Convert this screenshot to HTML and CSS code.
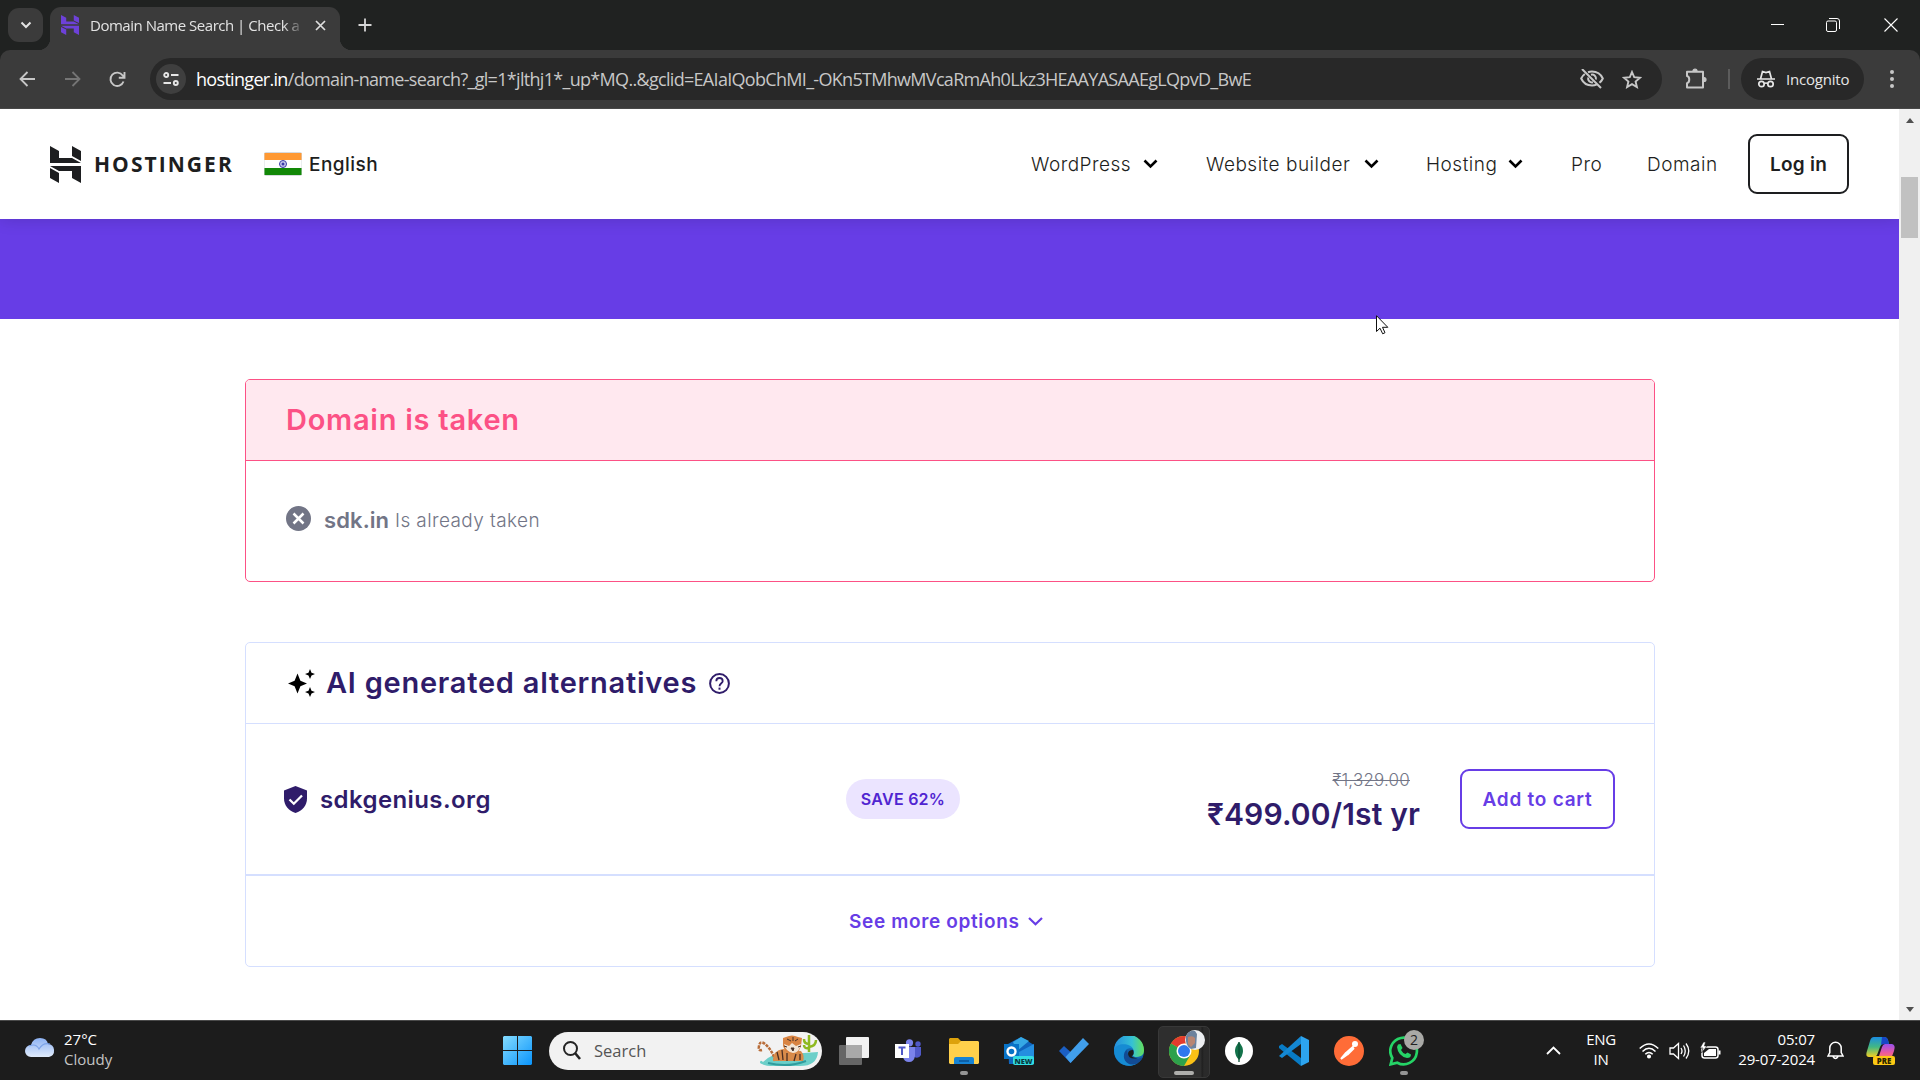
FILE: index.html
```html
<!DOCTYPE html>
<html lang="en">
<head>
<meta charset="utf-8">
<title>Domain Name Search</title>
<link rel="stylesheet" href="styles.css">
</head>
<body>
<div class="tabstrip">
  <div class="tab-search"><svg width="12" height="8" viewBox="0 0 12 8"><path d="M1.5 1.5 6 6l4.500-4.500" fill="none" stroke="#e3e3e3" stroke-width="2"/></svg></div>
  <div class="tab">
    <svg class="favicon" width="18" height="20" viewBox="0 0 31 37" preserveAspectRatio="none" fill="#6d41d8"><path d="M0 0 9 5V12H22L31 17H0ZM22 0 31 5V15L22 10ZM0 20H31V37L22 32V25H9L0 20ZM0 22 9 27V37L0 32Z"/></svg>
    <span class="tab-title">Domain Name Search | Check a</span>
    <svg class="tab-close" width="11" height="11" viewBox="0 0 11 11"><path d="M1 1 10 10M10 1 1 10" stroke="#dedede" stroke-width="1.700"/></svg>
  </div>
  <svg class="new-tab" width="14" height="14" viewBox="0 0 14 14"><path d="M7 .5V13.500M.5 7H13.500" stroke="#d6d6d6" stroke-width="1.800"/></svg>
  <div class="window-buttons">
    <svg width="13" height="14" viewBox="0 0 13 14"><path d="M0 6.500H13" stroke="#fff"/></svg>
    <svg width="14" height="14" viewBox="0 0 14 14" fill="none" stroke="#fff"><rect x=".5" y="3" width="10" height="10.500" rx="1.500"/><path d="M3 .5H11a2.500 2.500 0 0 1 2.500 2.500V11"/></svg>
    <svg width="14" height="14" viewBox="0 0 14 14"><path d="M.5.5 13.500 13.500M13.500.5.5 13.500" stroke="#fff" stroke-width="1.100"/></svg>
  </div>
</div>
<div class="toolbar">
  <svg class="nav-icon" width="17" height="16" viewBox="0 0 17 16" fill="none" stroke="#c7c7c7" stroke-width="1.800"><path d="M16 8H2M8.500 1 1.500 8l7 7"/></svg>
  <svg class="nav-icon" width="17" height="16" viewBox="0 0 17 16" fill="none" stroke="#757575" stroke-width="1.800"><path d="M1 8H15M8.500 1l7 7-7 7"/></svg>
  <svg class="nav-icon" width="17" height="17" viewBox="0 0 17 17" fill="none" stroke="#c7c7c7" stroke-width="1.900"><path d="M14.500 10.500A6.700 6.700 0 1 1 13.700 4.500L15.500 6.500M15.500 1V6.700H9.800"/></svg>
  <div class="omnibox">
    <span class="site-chip"><svg width="16" height="14" viewBox="0 0 16 14" fill="none" stroke="#e6e6e6" stroke-width="1.900"><circle cx="3.200" cy="3" r="2"/><path d="M8 3H15.500M.5 11H8"/><circle cx="12.800" cy="11" r="2"/></svg></span>
    <span class="url"><b>hostinger.in</b>/domain-name-search?_gl=1*jlthj1*_up*MQ..&amp;gclid=EAIaIQobChMI_-OKn5TMhwMVcaRmAh0Lkz3HEAAYASAAEgLQpvD_BwE</span>
    <svg class="eye-off" width="24" height="20" viewBox="0 0 24 20" fill="none" stroke="#c7c7c7" stroke-width="2"><path d="M8 3.200A11 11 0 0 1 12 2.500C17 2.500 21 5.500 22.800 9.500A11 11 0 0 1 19.500 13.700M16.500 15.600A11 11 0 0 1 12 16.500C7 16.500 3 13.500 1.200 9.500A11 11 0 0 1 4.800 5M2 0 21 19"/><path d="M8.200 8.500A4 4 0 0 0 13 13.300M11 5.700A4 4 0 0 1 15.900 10.500"/></svg>
    <svg class="star" width="20" height="19" viewBox="0 0 20 19" fill="none" stroke="#c7c7c7" stroke-width="1.900"><path d="M10 2 12.200 7.200 18 7.700 13.600 11.500 14.900 17 10 14.100 5.100 17 6.400 11.500 2 7.700 7.800 7.200Z"/></svg>
  </div>
  <svg class="puzzle" width="22" height="22" viewBox="0 0 22 22" fill="none" stroke="#c7c7c7" stroke-width="2" stroke-linejoin="round"><path d="M2 3.800H18V10.500V19.500H2V15.200C5 14.500 5 8.500 2 8Z"/><path d="M8 3a2 2 0 0 1 4 0ZM19 9.500a2 2 0 0 1 0 4Z" fill="#c7c7c7" stroke-width="1.200"/></svg>
  <i class="divider"></i>
  <div class="incognito">
    <svg width="18" height="18" viewBox="0 0 18 18" fill="none" stroke="#e6e6e6" stroke-width="1.700"><path d="M0 9H18M3.500 9 5.500 1.500 9 2.500 12.500 1.500 14.500 9"/><circle cx="4.500" cy="14" r="2.700"/><circle cx="13.500" cy="14" r="2.700"/><path d="M7 13.500Q9 12.500 11 13.500"/></svg>
    <span>Incognito</span>
  </div>
  <svg class="menu-dots" width="4" height="18" viewBox="0 0 4 18" fill="#c7c7c7"><circle cx="2" cy="2" r="2"/><circle cx="2" cy="9" r="2"/><circle cx="2" cy="16" r="2"/></svg>
</div>
<div class="viewport">
  <div class="page">
    <header class="site-header">
      <svg class="logo" width="31" height="37" viewBox="0 0 31 37" fill="#1d1e20"><path d="M0 0 9 5V12H22L31 17H0ZM22 0 31 5V15L22 10ZM0 20H31V37L22 32V25H9L0 20ZM0 22 9 27V37L0 32Z"/></svg>
      <span class="brand">HOSTINGER</span>
      <svg class="flag" width="38" height="24" viewBox="0 0 38 24"><rect width="38" height="24" rx="2" fill="#d6dade"/><path d="M0.500 1H37.500V8H.5Z" fill="#f93"/><path d="M.5 8H37.500V16H.5Z" fill="#fff"/><path d="M.5 16H37.500V23H.5Z" fill="#128807"/><circle cx="19" cy="12" r="3.500" fill="#c9c9ee" stroke="#3a3aa8"/><circle cx="19" cy="12" r="1.500" fill="#3a3aa8"/></svg>
      <span class="language">English</span>
      <nav class="menu">
        <span class="n1">WordPress</span><svg class="chev" viewBox="0 0 15 10"><path d="M1.500 1.500 7.500 7.500l6-6"/></svg>
        <span class="n2">Website builder</span><svg class="chev" viewBox="0 0 15 10"><path d="M1.500 1.500 7.500 7.500l6-6"/></svg>
        <span class="n3">Hosting</span><svg class="chev" viewBox="0 0 15 10"><path d="M1.500 1.500 7.500 7.500l6-6"/></svg>
        <span class="n4">Pro</span>
        <span class="n5">Domain</span>
      </nav>
      <div class="login">Log in</div>
    </header>
    <div class="banner"></div>
    <main class="results">
      <section class="card taken">
        <h2 class="card-head">Domain is taken</h2>
        <div class="taken-body">
          <svg width="25" height="25" viewBox="0 0 25 25"><circle cx="12.500" cy="12.500" r="12.500" fill="#727586"/><path d="M7.500 7.500 17.500 17.500M17.500 7.500 7.500 17.500" stroke="#fff" stroke-width="2.500"/></svg>
          <b>sdk.in</b><span>Is already taken</span>
        </div>
      </section>
      <section class="card alternatives">
        <h2 class="card-head">
          <svg class="sparkle" width="27" height="28" viewBox="0 0 27 28"><path d="M9.500 4.500 12.400 11.700 19 14.500 12.400 17.300 9.500 24.500 6.600 17.300 0 14.500 6.600 11.700ZM22 0 23.500 3.700 27 5 23.500 6.500 22 10 20.500 6.500 17 5 20.500 3.700ZM22 18 23.500 21.700 27 23 23.500 24.500 22 28 20.500 24.500 17 23 20.500 21.700Z"/></svg>
          <span>AI generated alternatives</span>
          <svg class="help" width="21" height="21" viewBox="0 0 21 21" fill="none" stroke="#2f1c6a" stroke-width="2"><circle cx="10.500" cy="10.500" r="9.400"/><path d="M7.300 8.200C7.300 3.900 13.700 3.900 13.700 8.200 13.700 10.200 10.500 10.500 10.500 13.200" stroke-width="1.800"/><path d="M10.500 14.600V16.700"/></svg>
        </h2>
        <div class="offer">
          <svg class="shield" width="23" height="27" viewBox="0 0 23 27"><path d="M11.500 0 23 4.500V12.500C23 19 18.500 25 11.500 27 4.500 25 0 19 0 12.500V4.500Z" fill="#2f1c6a"/><path d="M5.500 13.500 9.800 17.700 18 9.500" fill="none" stroke="#fff" stroke-width="2.300"/></svg>
          <span class="domain">sdkgenius.org</span>
          <span class="save">SAVE 62%</span>
          <div class="prices"><s>₹1,329.00</s><strong>₹499.00/1st yr</strong></div>
          <div class="cart">Add to cart</div>
        </div>
        <div class="more"><span>See more options</span><svg width="15" height="9" viewBox="0 0 15 9"><path d="M1 1 7.500 7.300 14 1" fill="none" stroke="#673de6" stroke-width="2.200"/></svg></div>
      </section>
    </main>
  </div>
  <div class="scrollbar"><i class="arrow up"></i><i class="thumb"></i><i class="arrow down"></i></div>
</div>
<footer class="taskbar">
  <div class="weather">
    <svg width="30" height="21" viewBox="0 0 30 21"><defs><linearGradient id="cl" x2="0" y2="1"><stop stop-color="#8db2f3"/><stop offset="1" stop-color="#e0ebfb"/></linearGradient></defs><path d="M6 20a6 6 0 0 1 0-12Q8 1 15 1T23 7a6.600 6.600 0 0 1 1 13Z" fill="url(#cl)"/><path d="M4 9Q11 6 14 12Q18 5 25 7" fill="none" stroke="#7ca3e8" stroke-width="1.200"/></svg>
    <div><span class="temp">27°C</span><span class="cond">Cloudy</span></div>
  </div>
  <svg class="start" width="29" height="29" viewBox="0 0 29 29"><defs><linearGradient id="wn" x2="1" y2="1"><stop stop-color="#84dcff"/><stop offset="1" stop-color="#0a94fb"/></linearGradient></defs><path d="M1 0H14V14H0V1ZM15 0H28L29 1V14H15ZM0 15H14V29H1L0 28ZM15 15H29V28L28 29H15Z" fill="url(#wn)"/></svg>
  <div class="search">
    <svg width="18" height="19" viewBox="0 0 18 19" fill="none" stroke="#242424" stroke-width="2"><circle cx="7.500" cy="7.500" r="6.500"/><path d="M12 12 17 18" stroke-width="2.600"/></svg>
    <span>Search</span>
    <svg class="tiger" width="64" height="34" viewBox="0 0 64 34">
      <path d="M7 28Q16 18 34 20L62 18Q61 32 44 32H18Q8 32 4 29Q4 25 7 28Z" fill="#6ccfc9"/><path d="M12 29Q32 34 50 27" fill="none" stroke="#2f9c9e" stroke-width="2"/>
      <path d="M19 27Q17 17 9 10Q4 6 3 12Q2 17 6 16" fill="none" stroke="#b96d39" stroke-width="2.500" stroke-dasharray="3 1"/>
      <path d="M17 27Q17 16 27 15L45 17Q49 22 47 27Z" fill="#d88b4a"/><path d="M21 18 23 26M26 16 27 26M31 19V27M40 20 38 27M44 20V26" stroke="#4a2e22" stroke-width="1.300"/>
      <path d="M27 4 30 3Q36 0 42 3L46 4 45 12Q43 19 37 20 29 19 27 12Z" fill="#d98442"/><path d="M28 10 33 12 36 9 40 12 45 10Q43 19 37 19 30 18 28 10Z" fill="#f2e5d5"/><path d="M31 5 35 7M37 3V7M42 5 39 7M28 12 31 13M45 12 42 13M35 14H38L37 17Z" stroke="#49332b" fill="#49332b"/>
      <path d="M53 18V1M53 10Q48 10 48 5M53 13Q60 12 60 6M53 14Q48 15 48 11" fill="none" stroke="#8eb91f" stroke-width="2.500"/>
    </svg>
  </div>
  <div class="apps">
    <span class="app"><svg width="30" height="28" viewBox="0 0 30 28"><rect x="7" width="23" height="21" rx="1" fill="#f2f2f2"/><rect y="8" width="23" height="20" rx="1" fill="#666"/><path d="M7 8H23V21H7Z" fill="#a9a9a9"/></svg></span>
    <span class="app"><svg width="27" height="24" viewBox="0 0 27 24"><circle cx="14.500" cy="3.800" r="3.600" fill="#7b83eb"/><circle cx="23" cy="5" r="2.700" fill="#5059c9"/><path d="M16 8H26V16Q24 20 19 18Z" fill="#5059c9"/><path d="M8 8H20V17Q19 23 14 23T8 18Z" fill="#7b83eb"/><path d="M0 5H14V19H0Z" fill="#fff"/><path d="M3.500 8.500H10.500M7 8V16" stroke="#5059c9" stroke-width="2"/></svg></span>
    <span class="app running"><svg width="30" height="26" viewBox="0 0 30 26"><path d="M1 0H9L12 3H29V10H0V1Z" fill="#dda20b"/><path d="M0 6H9L12 3H29L30 4V25L29 26H1L0 25Z" fill="#ffd04b"/><path d="M5 26V21Q5 19 7 19H23Q25 19 25 21V26Z" fill="#1683d4"/><path d="M10 23H20" stroke="#0b5598" stroke-width="1.500"/></svg></span>
    <span class="app"><svg width="30" height="28" viewBox="0 0 30 28"><path d="M4 7 17 0 30 8V27H5Z" fill="#1065bd"/><path d="M9 5 17 0 25 4 13 14Z" fill="#35a8e5"/><path d="M15 15 30 7V27H12Z" fill="#248ee0"/><path d="M0 7H15V22H0Z" fill="#0873c7"/><circle cx="7.500" cy="14.500" r="4" fill="none" stroke="#fff" stroke-width="2.400"/><rect x="9" y="19" width="21" height="9" rx="2" fill="#32dce2"/><text x="19.500" y="26.500" text-anchor="middle" font-size="7.500" font-weight="800" font-family="Open Sans" fill="#073b42">NEW</text></svg></span>
    <span class="app"><svg width="30" height="25" viewBox="0 0 30 25"><path d="M0 13 5 8 17 19 11.500 25Z" fill="#1b5fc4"/><path d="M11.500 25 6.500 19 24 0 30 6Z" fill="#419fec"/></svg></span>
    <span class="app"><svg width="30" height="30" viewBox="0 0 30 30"><defs><linearGradient id="ed" x2="1"><stop stop-color="#238dde"/><stop offset=".6" stop-color="#35c1d5"/><stop offset="1" stop-color="#65e05a"/></linearGradient></defs><circle cx="15" cy="15" r="15" fill="#1264ad"/><path d="M0 14A15 15 0 0 1 30 14C30 20 26 21 21 21 17 20 20 18 20 15 18 8 4 7 0 14Z" fill="url(#ed)"/><path d="M0 14C2 6 17 7 19 13 13 10 9 16 11 21 13 26 18 28 22 28 13 33 0 27 0 14Z" fill="#168bd3"/><path d="M13 14C13 22 22 25 29 21 26 27 20 30 15 28 8 25 9 16 13 14Z" fill="#124b94"/><path d="M19 14Q21 19 17.500 20 19 22 24 22 15 24 14 18 14 14 19 14Z" fill="#1c1c1c"/></svg></span>
    <span class="app active"><svg width="36" height="37" viewBox="0 0 36 37"><circle cx="15" cy="22" r="15" fill="#fbc116"/><path d="M15 22 2 14.500A15 15 0 0 1 28 14.500H15Z" fill="#e33b2e"/><path d="M2 14.500A15 15 0 0 0 15 37L21.500 25.800 15 22Z" fill="#2da14c"/><circle cx="15" cy="22" r="7.500" fill="#fff"/><circle cx="15" cy="22" r="6" fill="#2f78ed"/><circle cx="26" cy="11" r="10" fill="#eceef1"/><path d="M17 7Q20 1 26 2L28 5 27 19 22 20Q16 17 17 7Z" fill="#6c829d"/><path d="M19 8Q24 6 26 9L26 14 22 18 19 15Z" fill="#b78572"/></svg></span>
    <span class="app"><svg width="28" height="28" viewBox="0 0 28 28"><circle cx="14" cy="14" r="14" fill="#fff"/><path d="M14 5Q22 14 14 23 6 14 14 5Z" fill="#13734b"/><path d="M14 5V25" stroke="#0b5035" stroke-width="1.300"/></svg></span>
    <span class="app"><svg width="30" height="30" viewBox="0 0 30 30"><path d="M22 0 30 4V26L22 30Z" fill="#2da4ef"/><path d="M0 10 3 8 22 22V30L0 12Z" fill="#087bc5"/><path d="M0 20 22 0V8L3 22 0 20Z" fill="#1488d3"/></svg></span>
    <span class="app"><svg width="30" height="30" viewBox="0 0 30 30"><circle cx="15" cy="15" r="15" fill="#ff6c37"/><circle cx="21" cy="8" r="3" fill="#fff"/><path d="M20 10 12 17 14 18 20 12M12 17 7 23 14 18" fill="none" stroke="#fff" stroke-width="2"/></svg></span>
    <span class="app running"><svg width="30" height="30" viewBox="0 0 30 30"><path d="M3.300 22A13.300 13.300 0 1 1 8.300 26.700L1.700 28.300Z" fill="none" stroke="#25d366" stroke-width="2.700"/><path d="M9 8.500 11.500 8 13.500 12 12 14Q13.500 17 16.500 18L18.500 16.500 22 18.500Q22 22 18 22 9 20 8 11Z" fill="#25d366"/></svg><em class="badge">2</em></span>
  </div>
  <svg class="caret" width="15" height="9" viewBox="0 0 15 9"><path d="M1 8 7.500 1.500 14 8" fill="none" stroke="#fff" stroke-width="1.800"/></svg>
  <div class="lang"><span>ENG</span><span>IN</span></div>
  <div class="status">
    <svg width="20" height="16" viewBox="0 0 20 16" fill="none" stroke="#fff" stroke-width="1.500"><path d="M.7 5.500Q10-3.500 19.300 5.500M3.500 8.500Q10 2 16.500 8.500M6.300 11.300Q10 7.500 13.700 11.300"/><circle cx="10" cy="13.500" r="1.300" fill="#fff"/></svg>
    <svg width="21" height="18" viewBox="0 0 21 18" fill="none" stroke="#fff" stroke-width="1.300"><path d="M1 6H4.500L9.500 1.500V16.500L4.500 12H1ZM12 6Q14 9 12 12M14.500 3.500Q18 9 14.500 14.500M17 1.500Q22.500 9 17 16.500"/></svg>
    <svg width="21" height="18" viewBox="0 0 21 18"><rect x="2" y="5" width="16" height="11" rx="2.500" fill="none" stroke="#fff" stroke-width="1.500"/><path d="M9 7H16V14H4V11ZM18.500 8.500H20.500V12.500H18.500Z" fill="#fff"/><path d="M3.500 0 0 6H3L1.500 11 7 4H4.500L5.500 0Z" fill="#fff" stroke="#1c1c1c" stroke-width=".6"/></svg>
  </div>
  <div class="clock"><span>05:07</span><span class="date">29-07-2024</span></div>
  <svg class="bell" width="17" height="19" viewBox="0 0 17 19" fill="none" stroke="#fff" stroke-width="1.500"><path d="M1 15 2.800 11.500V7A5.700 5.700 0 0 1 14.200 7V11.500L16 15ZM6 15.500Q8.500 19.500 11 15.500"/></svg>
  <svg class="copilot" width="30" height="28" viewBox="0 0 30 28"><defs><linearGradient id="c1" x2="0" y2="1"><stop stop-color="#1b8de2"/><stop offset=".5" stop-color="#42b883"/><stop offset="1" stop-color="#f5cf21"/></linearGradient><linearGradient id="c2" x2="0" y2="1"><stop stop-color="#9750ee"/><stop offset=".6" stop-color="#ee5a9b"/><stop offset="1" stop-color="#f48d4f"/></linearGradient></defs><path d="M8 0H18Q21 0 22 3L23 7H17Q15 7 14 10L11 18Q10 20 7 20H3Q-1 20 1 14L4 4Q5 0 8 0Z" fill="url(#c1)"/><path d="M16 0H18Q21 0 22 3L23 7H17L15 8Z" fill="#1746c7"/><path d="M19 7H26Q30 8 28 14L25 22H12L16 10Q17 7 19 7Z" fill="url(#c2)"/><rect x="7" y="19" width="22" height="9" rx="2" fill="#fcc914"/><text x="18" y="26.500" text-anchor="middle" font-size="7.800" font-weight="800" font-family="Open Sans" fill="#2c2500">PRE</text></svg>
</footer>
<svg class="cursor" width="13" height="20" viewBox="0 0 13 20"><path d="M.5.7V16.500L4 13.200 6.700 18.800 9 17.700 6.500 12.300H11.800Z" fill="#fff" stroke="#111"/></svg>
</body>
</html>
```
FILE: styles.css
```css
* { box-sizing: border-box; }
body { margin: 0; width: 1920px; height: 1080px; overflow: hidden; display: flex; flex-direction: column; background: #202221; font-family: "Open Sans", "Noto Sans", sans-serif; white-space: nowrap; }
svg { display: block; flex: none; }

/* Browser tab strip */
.tabstrip { height: 50px; flex: none; display: flex; align-items: flex-start; padding-left: 8px; }
.tab-search { width: 35px; height: 34px; margin-top: 8px; border-radius: 11px; background: #3b3b3b; display: grid; place-items: center; }
.tab { position: relative; width: 290px; height: 43px; margin: 7px 0 0 7px; border-radius: 11px 11px 0 0; background: #3b3b3b; display: flex; align-items: center; padding: 0 14px 7px 11px; }
.tab::before, .tab::after { content: ""; position: absolute; bottom: 0; width: 12px; height: 12px; }
.tab::before { left: -12px; background: radial-gradient(circle at 0 0, transparent 12px, #3b3b3b 12.5px); }
.tab::after { right: -12px; background: radial-gradient(circle at 100% 0, transparent 12px, #3b3b3b 12.5px); }
.tab-title { margin-left: 11px; width: 210px; font-size: 15px; letter-spacing: -.48px; line-height: 22px; color: #e3e3e3; -webkit-mask-image: linear-gradient(90deg, #000 193px, transparent 215px); }
.tab-close { margin-left: 15px; }
.new-tab { margin: 18px 0 0 18px; }
.window-buttons { margin: 18px 22px 0 auto; display: flex; gap: 44px; }
.window-buttons svg:first-child { margin-right: -2px; }

/* Browser toolbar */
.toolbar { height: 59px; flex: none; display: flex; align-items: center; padding-left: 19px; background: #3b3b3b; border-radius: 10px 10px 0 0; border-bottom: 1px solid #484848; }
.nav-icon { margin-right: 28px; }
.omnibox { width: 1512px; height: 42px; margin-left: -4px; border-radius: 21px; background: #282828; display: flex; align-items: center; padding-left: 6px; }
.site-chip { width: 30px; height: 30px; border-radius: 50%; background: #3f3f3f; display: grid; place-items: center; }
.url { margin-left: 10px; width: 1385px; font-size: 18px; letter-spacing: -.69px; color: #c7c7c7; }
.url b { font-weight: 400; color: #fff; }
.eye-off { margin-left: -1px; }
.star { margin-left: 18px; }
.puzzle { margin-left: 23px; }
.divider { width: 2px; height: 35px; margin: 0 11px 0 21px; background: #5c5c5c; height: 20px; }
.incognito { width: 123px; height: 42px; border-radius: 21px; background: #282828; display: flex; align-items: center; padding-left: 16px; gap: 11px; color: #e6e6e6; font-size: 15px; letter-spacing: -.2px; }
.menu-dots { margin-left: 26px; }

/* Web page */
.viewport { height: 911px; flex: none; display: flex; background: #fff; font-family: Inter, sans-serif; }
.page { width: 1899px; }
.site-header { position: relative; z-index: 1; height: 110px; display: flex; align-items: center; padding-left: 50px; background: #fff; box-shadow: 0 0 16px rgba(0,0,0,.16); color: #1d1e20; clip-path: inset(0 0 -20px 0); }
.brand { margin-left: 13px; width: 170px; font: 700 21px "Open Sans", sans-serif; letter-spacing: 2.05px; }
.language { margin-left: 7px; width: 722px; font-size: 19px; font-weight: 500; letter-spacing: .45px; }
.menu { display: flex; align-items: center; width: 717px; font-size: 19px; font-weight: 300; letter-spacing: .5px; }
.chev { width: 15px; height: 10px; fill: none; stroke: #000; stroke-width: 2.6; }
.n1 { width: 112px; }
.n2 { width: 158px; margin-left: 48px; }
.n3 { width: 82px; margin-left: 47px; }
.n4 { width: 75px; margin-left: 48px; }
.n5 { margin-left: 1px; }
.login { width: 101px; height: 60px; border: 2px solid #1d1e20; border-radius: 9px; display: grid; place-items: center; font-size: 19px; font-weight: 600; letter-spacing: .25px; }
.banner { height: 100px; background: #673de6; }
.results { padding: 60px 244px 0 245px; }
.card { border: 1px solid #d5dfff; border-radius: 5px; }
.card-head { margin: 0; height: 81px; display: flex; align-items: center; padding: 0 0 2px 40px; border-bottom: 1px solid #d5dfff; font-size: 29px; font-weight: 600; letter-spacing: .75px; color: #2f1c6a; }
.taken { height: 203px; border-color: #fc5185; overflow: hidden; }
.taken .card-head { background: #ffe8ef; border-color: #fc5185; color: #fc5185; }
.taken-body { height: 118px; display: flex; align-items: center; padding-left: 40px; color: #727586; font-size: 19px; font-weight: 300; letter-spacing: .4px; }
.taken-body svg { margin-bottom: 4px; }
.taken-body b { margin-left: 13px; width: 71px; font-size: 22px; font-weight: 600; letter-spacing: .1px; }
.alternatives { height: 325px; margin-top: 60px; }
.sparkle { margin: 2px 11px 0 2px; }
.help { margin: 2px 0 0 12px; }
.offer { height: 152px; display: flex; align-items: center; padding-left: 38px; border-bottom: 2px solid #d5dfff; color: #2f1c6a; }
.domain { margin-left: 13px; width: 526px; font-size: 24px; font-weight: 600; letter-spacing: .4px; }
.save { width: 114px; height: 40px; border-radius: 20px; background: #ebe4ff; color: #5025d1; display: grid; place-items: center; font-size: 16px; font-weight: 600; letter-spacing: .25px; }
.prices { width: 460px; margin-top: 5px; display: flex; flex-direction: column; align-items: flex-end; }
.prices s { margin-right: 10px; font-size: 17px; font-weight: 300; letter-spacing: .2px; color: #727586; line-height: 24px; }
.prices strong { font-size: 30px; font-weight: 600; letter-spacing: .15px; line-height: 44px; }
.cart { width: 155px; height: 60px; margin-left: 40px; border: 2px solid #673de6; border-radius: 9px; color: #673de6; display: grid; place-items: center; font-size: 19px; font-weight: 600; letter-spacing: .75px; }
.more { height: 90px; display: flex; align-items: center; padding-left: 603px; gap: 8px; color: #673de6; font-size: 19px; font-weight: 600; letter-spacing: .65px; }

/* Scroll bar */
.scrollbar { width: 21px; background: #f0f0f0; display: flex; flex-direction: column; align-items: center; }
.arrow { border: 4.500px solid transparent; width: 0; height: 0; }
.up { border-bottom: 5px solid #505050; margin-top: 5px; }
.thumb { width: 17px; height: 61px; margin-top: 54px; background: #c1c1c1; }
.down { border-top: 5px solid #505050; margin: auto 0 4px; }

/* Windows taskbar */
.taskbar { height: 60px; flex: none; display: flex; align-items: center; border-top: 1px solid #4a4a4a; background: #1c1c1c; padding-left: 25px; color: #fff; font-size: 15px; line-height: 20px; }
.weather { width: 478px; display: flex; align-items: center; gap: 9px; }
.weather svg { margin-bottom: 6px; }
.weather div, .lang, .clock { margin-bottom: 4px; }
.weather span, .lang span, .clock span { display: block; }
.cond { color: #c4c4c4; }
.search { margin-left: 17px; width: 273px; height: 38px; border-radius: 19px; background: #f2f2f2; display: flex; align-items: center; padding-left: 14px; color: #555; font-size: 16.500px; }
.search span { margin-left: 13px; width: 162px; }
.apps { margin-left: 4px; display: flex; }
.app { position: relative; width: 55px; height: 50px; display: grid; place-items: center; }
.running::after, .active::after { content: ""; position: absolute; left: 23.500px; bottom: 1px; width: 8px; height: 4px; border-radius: 2px; background: #959595; }
.active::before { content: ""; position: absolute; left: 2px; top: 0; width: 50px; height: 50px; border-radius: 5px; border: 1px solid #383838; background: linear-gradient(90deg, #2e2e2e 42px, #1f1f1f 43px, #2a2a2a 45px); }
.active::after { width: 20px; left: 17.500px; background: #aeaeac; }
.active svg { position: relative; margin: -7px 0 0 6px; }
.badge { position: absolute; left: 28px; top: 4px; width: 20px; height: 20px; border-radius: 50%; background: #a9a9a6; color: #222; font-size: 14px; line-height: 20px; text-align: center; font-style: normal; }
.caret { margin-left: 115px; }
.lang { width: 40px; margin-left: 20px; text-align: center; letter-spacing: -.3px; }
.status { margin-left: 18px; display: flex; align-items: center; gap: 10px; }
.clock { width: 94px; text-align: right; letter-spacing: -.15px; }
.bell { margin-left: 12px; }
.copilot { margin-left: 22px; }

.cursor { position: absolute; left: 1376px; top: 315px; }
```
